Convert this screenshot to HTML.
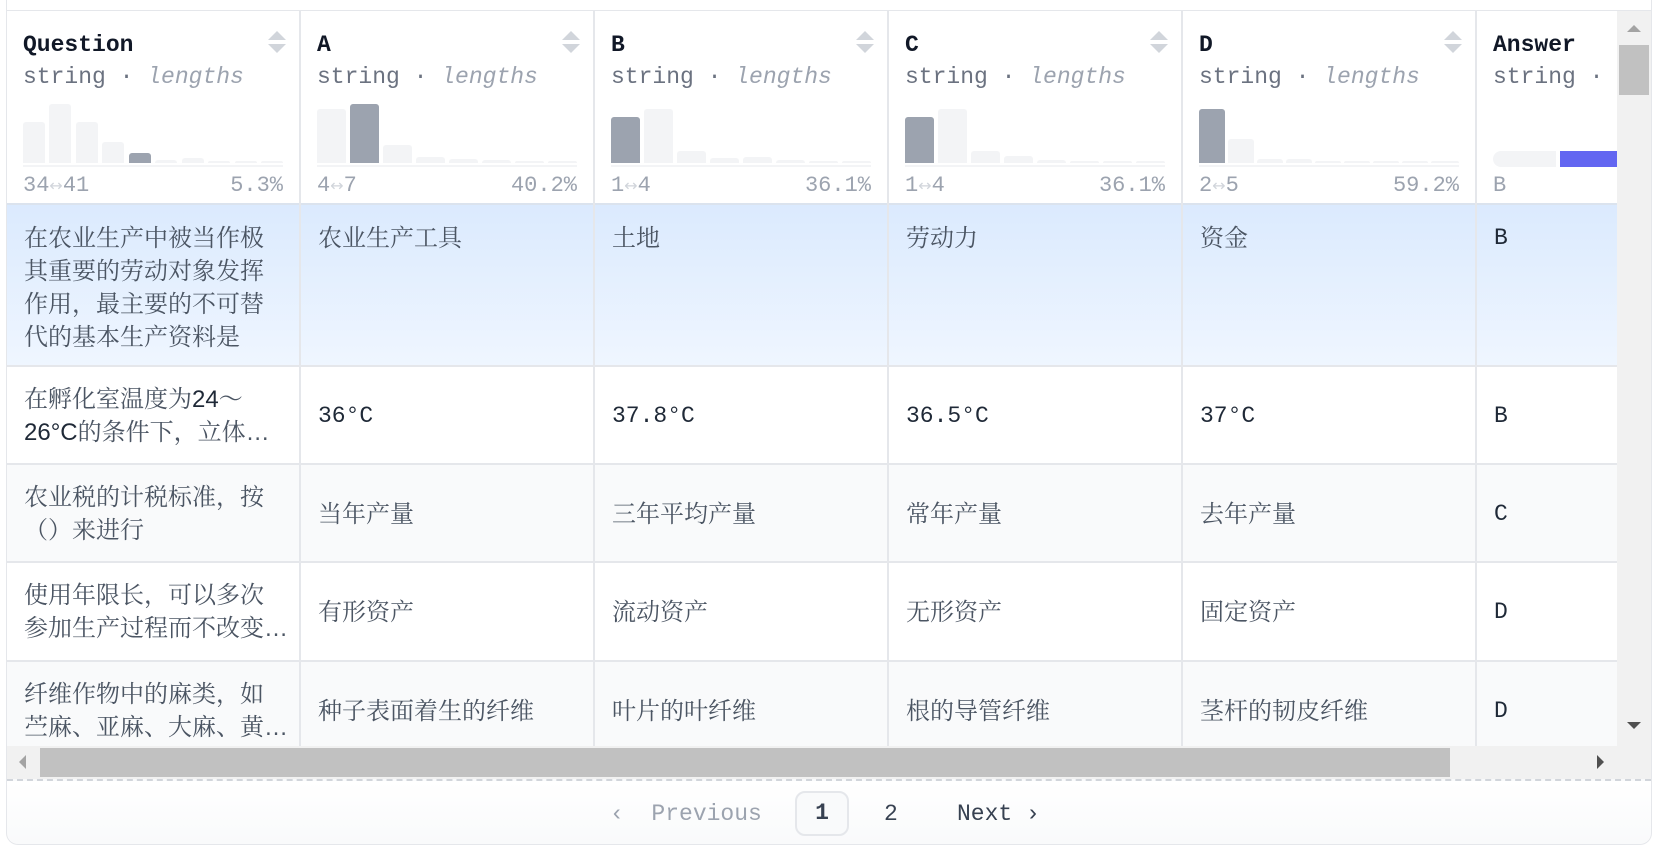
<!DOCTYPE html>
<html><head><meta charset="utf-8"><style>
*{box-sizing:border-box;margin:0;padding:0}
body{width:1657px;height:845px;background:#fff;position:relative;overflow:hidden;font-family:"Liberation Mono","Noto Serif CJK SC",monospace}
.abs{position:absolute}
.card{position:absolute;left:6px;top:0;width:1646px;height:845px;border-left:1px solid #e5e7eb;border-right:1px solid #e5e7eb;border-bottom:1px solid #e5e7eb;border-radius:0 0 12px 12px}
.topline{position:absolute;left:6px;top:10px;width:1646px;height:1px;background:#e5e7eb}
.vl{position:absolute;width:2px;background:#e5e7eb}
.hl{position:absolute;height:2px;background:#e5e7eb;left:6px;width:1611px}
.h1{font-weight:bold;font-size:23px;color:#111827}
.h2{font-size:23px;color:#6b7280}
.h2 i{color:#9ca3af}
.ft{font-size:22px;color:#9ca3af}
.ar{font-size:16px;color:#d1d5db;font-family:"DejaVu Sans",sans-serif}
.bar{position:absolute;bottom:0;border-radius:3px 3px 0 0;background:#f3f4f6}
.bar.d{background:#9ca3af}
.cell{position:absolute;font-size:24px;line-height:33px;color:#4b5563;font-family:"Liberation Sans","Noto Serif CJK SC",serif;white-space:nowrap}
.m{font-family:"Liberation Mono",monospace;color:#1f2937;font-size:23px}
.sort{position:absolute;width:0;height:0;border-left:9px solid transparent;border-right:9px solid transparent}
</style></head><body>
<div class="topline"></div>
<div class="abs" style="left:7px;top:205px;width:1610px;height:161px;background:linear-gradient(#dbeafe,#eff6ff)"></div>
<div class="abs" style="left:7px;top:464px;width:1610px;height:98px;background:#f9fafb"></div>
<div class="abs" style="left:7px;top:661px;width:1610px;height:85px;background:#f9fafb"></div>
<div class="hl" style="top:203px;background:#dbe3ee"></div>
<div class="hl" style="top:365px"></div>
<div class="hl" style="top:463px"></div>
<div class="hl" style="top:561px"></div>
<div class="hl" style="top:660px"></div>
<div class="vl" style="left:299px;top:11px;height:735px"></div>
<div class="vl" style="left:593px;top:11px;height:735px"></div>
<div class="vl" style="left:887px;top:11px;height:735px"></div>
<div class="vl" style="left:1181px;top:11px;height:735px"></div>
<div class="vl" style="left:1475px;top:11px;height:735px"></div>

<div class="abs h1" style="left:23px;top:32px">Question</div>
<div class="abs h2" style="left:23px;top:64px">string · <i>lengths</i></div>
<div class="abs h1" style="left:317px;top:32px">A</div>
<div class="abs h2" style="left:317px;top:64px">string · <i>lengths</i></div>
<div class="abs h1" style="left:611px;top:32px">B</div>
<div class="abs h2" style="left:611px;top:64px">string · <i>lengths</i></div>
<div class="abs h1" style="left:905px;top:32px">C</div>
<div class="abs h2" style="left:905px;top:64px">string · <i>lengths</i></div>
<div class="abs h1" style="left:1199px;top:32px">D</div>
<div class="abs h2" style="left:1199px;top:64px">string · <i>lengths</i></div>
<div class="abs h1" style="left:1493px;top:32px">Answer</div>
<div class="abs h2" style="left:1493px;top:64px;width:124px;overflow:hidden;white-space:nowrap">string · <i>classes</i></div>

<div class="sort" style="left:268px;top:31px;border-bottom:9px solid #d1d5db"></div><div class="sort" style="left:268px;top:44px;border-top:9px solid #d1d5db"></div>
<div class="sort" style="left:562px;top:31px;border-bottom:9px solid #d1d5db"></div><div class="sort" style="left:562px;top:44px;border-top:9px solid #d1d5db"></div>
<div class="sort" style="left:856px;top:31px;border-bottom:9px solid #d1d5db"></div><div class="sort" style="left:856px;top:44px;border-top:9px solid #d1d5db"></div>
<div class="sort" style="left:1150px;top:31px;border-bottom:9px solid #d1d5db"></div><div class="sort" style="left:1150px;top:44px;border-top:9px solid #d1d5db"></div>
<div class="sort" style="left:1444px;top:31px;border-bottom:9px solid #d1d5db"></div><div class="sort" style="left:1444px;top:44px;border-top:9px solid #d1d5db"></div>

<div class="abs" style="left:23px;top:104px;width:260px;height:59px">
<div class="bar" style="left:0;width:22px;height:41px"></div><div class="bar" style="left:26px;width:22px;height:59px"></div><div class="bar" style="left:53px;width:22px;height:41px"></div><div class="bar" style="left:79px;width:22px;height:21px"></div><div class="bar d" style="left:106px;width:22px;height:10px"></div><div class="bar" style="left:132px;width:22px;height:3px"></div><div class="bar" style="left:159px;width:22px;height:5px"></div><div class="bar" style="left:185px;width:22px;height:2px"></div><div class="bar" style="left:212px;width:22px;height:2px"></div><div class="bar" style="left:238px;width:22px;height:2px"></div></div>
<div class="abs" style="left:317px;top:104px;width:260px;height:59px">
<div class="bar" style="left:0;width:29px;height:54px"></div><div class="bar d" style="left:33px;width:29px;height:59px"></div><div class="bar" style="left:66px;width:29px;height:18px"></div><div class="bar" style="left:99px;width:29px;height:6px"></div><div class="bar" style="left:132px;width:29px;height:4px"></div><div class="bar" style="left:165px;width:29px;height:3px"></div><div class="bar" style="left:198px;width:29px;height:2px"></div><div class="bar" style="left:231px;width:29px;height:2px"></div></div>
<div class="abs" style="left:611px;top:104px;width:260px;height:59px">
<div class="bar d" style="left:0;width:29px;height:46px"></div><div class="bar" style="left:33px;width:29px;height:54px"></div><div class="bar" style="left:66px;width:29px;height:12px"></div><div class="bar" style="left:99px;width:29px;height:5px"></div><div class="bar" style="left:132px;width:29px;height:6px"></div><div class="bar" style="left:165px;width:29px;height:3px"></div><div class="bar" style="left:198px;width:29px;height:2px"></div><div class="bar" style="left:231px;width:29px;height:2px"></div></div>
<div class="abs" style="left:905px;top:104px;width:260px;height:59px">
<div class="bar d" style="left:0;width:29px;height:46px"></div><div class="bar" style="left:33px;width:29px;height:54px"></div><div class="bar" style="left:66px;width:29px;height:12px"></div><div class="bar" style="left:99px;width:29px;height:7px"></div><div class="bar" style="left:132px;width:29px;height:3px"></div><div class="bar" style="left:165px;width:29px;height:2px"></div><div class="bar" style="left:198px;width:29px;height:2px"></div><div class="bar" style="left:231px;width:29px;height:2px"></div></div>
<div class="abs" style="left:1199px;top:104px;width:260px;height:59px">
<div class="bar d" style="left:0;width:26px;height:54px"></div><div class="bar" style="left:29px;width:26px;height:24px"></div><div class="bar" style="left:58px;width:26px;height:4px"></div><div class="bar" style="left:87px;width:26px;height:4px"></div><div class="bar" style="left:116px;width:26px;height:2px"></div><div class="bar" style="left:145px;width:26px;height:2px"></div><div class="bar" style="left:174px;width:26px;height:2px"></div><div class="bar" style="left:203px;width:26px;height:2px"></div><div class="bar" style="left:232px;width:28px;height:2px"></div></div>
<div class="abs" style="left:23px;top:165px;width:260px;height:2px;background:#f3f4f6"></div>
<div class="abs" style="left:317px;top:165px;width:260px;height:2px;background:#f3f4f6"></div>
<div class="abs" style="left:611px;top:165px;width:260px;height:2px;background:#f3f4f6"></div>
<div class="abs" style="left:905px;top:165px;width:260px;height:2px;background:#f3f4f6"></div>
<div class="abs" style="left:1199px;top:165px;width:260px;height:2px;background:#f3f4f6"></div>
<div class="abs" style="left:1493px;top:151px;width:63px;height:16px;background:#f3f4f6;border-radius:8px 0 0 8px"></div>
<div class="abs" style="left:1560px;top:151px;width:57px;height:16px;background:#6366f1"></div>

<div class="abs ft" style="left:23px;top:173px">34<span class="ar">↔</span>41</div><div class="abs ft" style="left:223px;top:173px;width:60px;text-align:right">5.3%</div>
<div class="abs ft" style="left:317px;top:173px">4<span class="ar">↔</span>7</div><div class="abs ft" style="left:497px;top:173px;width:80px;text-align:right">40.2%</div>
<div class="abs ft" style="left:611px;top:173px">1<span class="ar">↔</span>4</div><div class="abs ft" style="left:791px;top:173px;width:80px;text-align:right">36.1%</div>
<div class="abs ft" style="left:905px;top:173px">1<span class="ar">↔</span>4</div><div class="abs ft" style="left:1085px;top:173px;width:80px;text-align:right">36.1%</div>
<div class="abs ft" style="left:1199px;top:173px">2<span class="ar">↔</span>5</div><div class="abs ft" style="left:1379px;top:173px;width:80px;text-align:right">59.2%</div>
<div class="abs ft" style="left:1493px;top:173px">B</div>

<div class="cell" style="left:24px;top:222px">在农业生产中被当作极<br>其重要的劳动对象发挥<br>作用，最主要的不可替<br>代的基本生产资料是</div>
<div class="cell" style="left:318px;top:222px">农业生产工具</div>
<div class="cell" style="left:612px;top:222px">土地</div>
<div class="cell" style="left:906px;top:222px">劳动力</div>
<div class="cell" style="left:1200px;top:222px">资金</div>
<div class="cell m" style="left:1494px;top:222px">B</div>
<div class="cell" style="left:24px;top:383px">在孵化室温度为<span style="color:#1f2937">24</span>～<br><span style="color:#1f2937">26°C</span>的条件下，立体…</div>
<div class="cell m" style="left:318px;top:400px">36°C</div>
<div class="cell m" style="left:612px;top:400px">37.8°C</div>
<div class="cell m" style="left:906px;top:400px">36.5°C</div>
<div class="cell m" style="left:1200px;top:400px">37°C</div>
<div class="cell m" style="left:1494px;top:400px">B</div>
<div class="cell" style="left:24px;top:481px">农业税的计税标准，按<br>（）来进行</div>
<div class="cell" style="left:318px;top:498px">当年产量</div>
<div class="cell" style="left:612px;top:498px">三年平均产量</div>
<div class="cell" style="left:906px;top:498px">常年产量</div>
<div class="cell" style="left:1200px;top:498px">去年产量</div>
<div class="cell m" style="left:1494px;top:498px">C</div>
<div class="cell" style="left:24px;top:579px">使用年限长，可以多次<br>参加生产过程而不改变…</div>
<div class="cell" style="left:318px;top:596px">有形资产</div>
<div class="cell" style="left:612px;top:596px">流动资产</div>
<div class="cell" style="left:906px;top:596px">无形资产</div>
<div class="cell" style="left:1200px;top:596px">固定资产</div>
<div class="cell m" style="left:1494px;top:596px">D</div>
<div class="cell" style="left:24px;top:678px">纤维作物中的麻类，如<br>苎麻、亚麻、大麻、黄…</div>
<div class="cell" style="left:318px;top:695px">种子表面着生的纤维</div>
<div class="cell" style="left:612px;top:695px">叶片的叶纤维</div>
<div class="cell" style="left:906px;top:695px">根的导管纤维</div>
<div class="cell" style="left:1200px;top:695px">茎杆的韧皮纤维</div>
<div class="cell m" style="left:1494px;top:695px">D</div>

<div class="abs" style="left:1617px;top:11px;width:34px;height:735px;background:#f1f1f1"></div>
<div class="abs" style="left:1619px;top:45px;width:30px;height:50px;background:#c1c1c1"></div>
<div class="abs" style="left:1627px;top:25px;border-left:7px solid transparent;border-right:7px solid transparent;border-bottom:7px solid #a3a3a3"></div>
<div class="abs" style="left:1627px;top:722px;border-left:7px solid transparent;border-right:7px solid transparent;border-top:7px solid #505050"></div>
<div class="abs" style="left:7px;top:746px;width:1644px;height:33px;background:#f1f1f1"></div>
<div class="abs" style="left:40px;top:748px;width:1410px;height:29px;background:#c1c1c1"></div>
<div class="abs" style="left:19px;top:755px;border-top:7px solid transparent;border-bottom:7px solid transparent;border-right:7px solid #a3a3a3"></div>
<div class="abs" style="left:1597px;top:755px;border-top:7px solid transparent;border-bottom:7px solid transparent;border-left:7px solid #505050"></div>
<div class="abs" style="left:7px;top:779px;width:1644px;height:65px;background:linear-gradient(#fff,#f9fafb);border-radius:0 0 12px 12px;border-top:2px dashed #d1d5db"></div>
<div class="abs" style="left:610px;top:801px;font-size:23px;color:#9ca3af">‹ &nbsp;Previous</div>
<div class="abs" style="left:795px;top:791px;width:54px;height:45px;border:2px solid #e5e7eb;border-radius:10px;background:#f9fafb;text-align:center;line-height:41px;font-size:23px;font-weight:bold;color:#374151">1</div>
<div class="abs" style="left:884px;top:801px;font-size:23px;color:#374151">2</div>
<div class="abs" style="left:957px;top:801px;font-size:23px;color:#374151">Next ›</div>
<div class="card"></div>
</body></html>
